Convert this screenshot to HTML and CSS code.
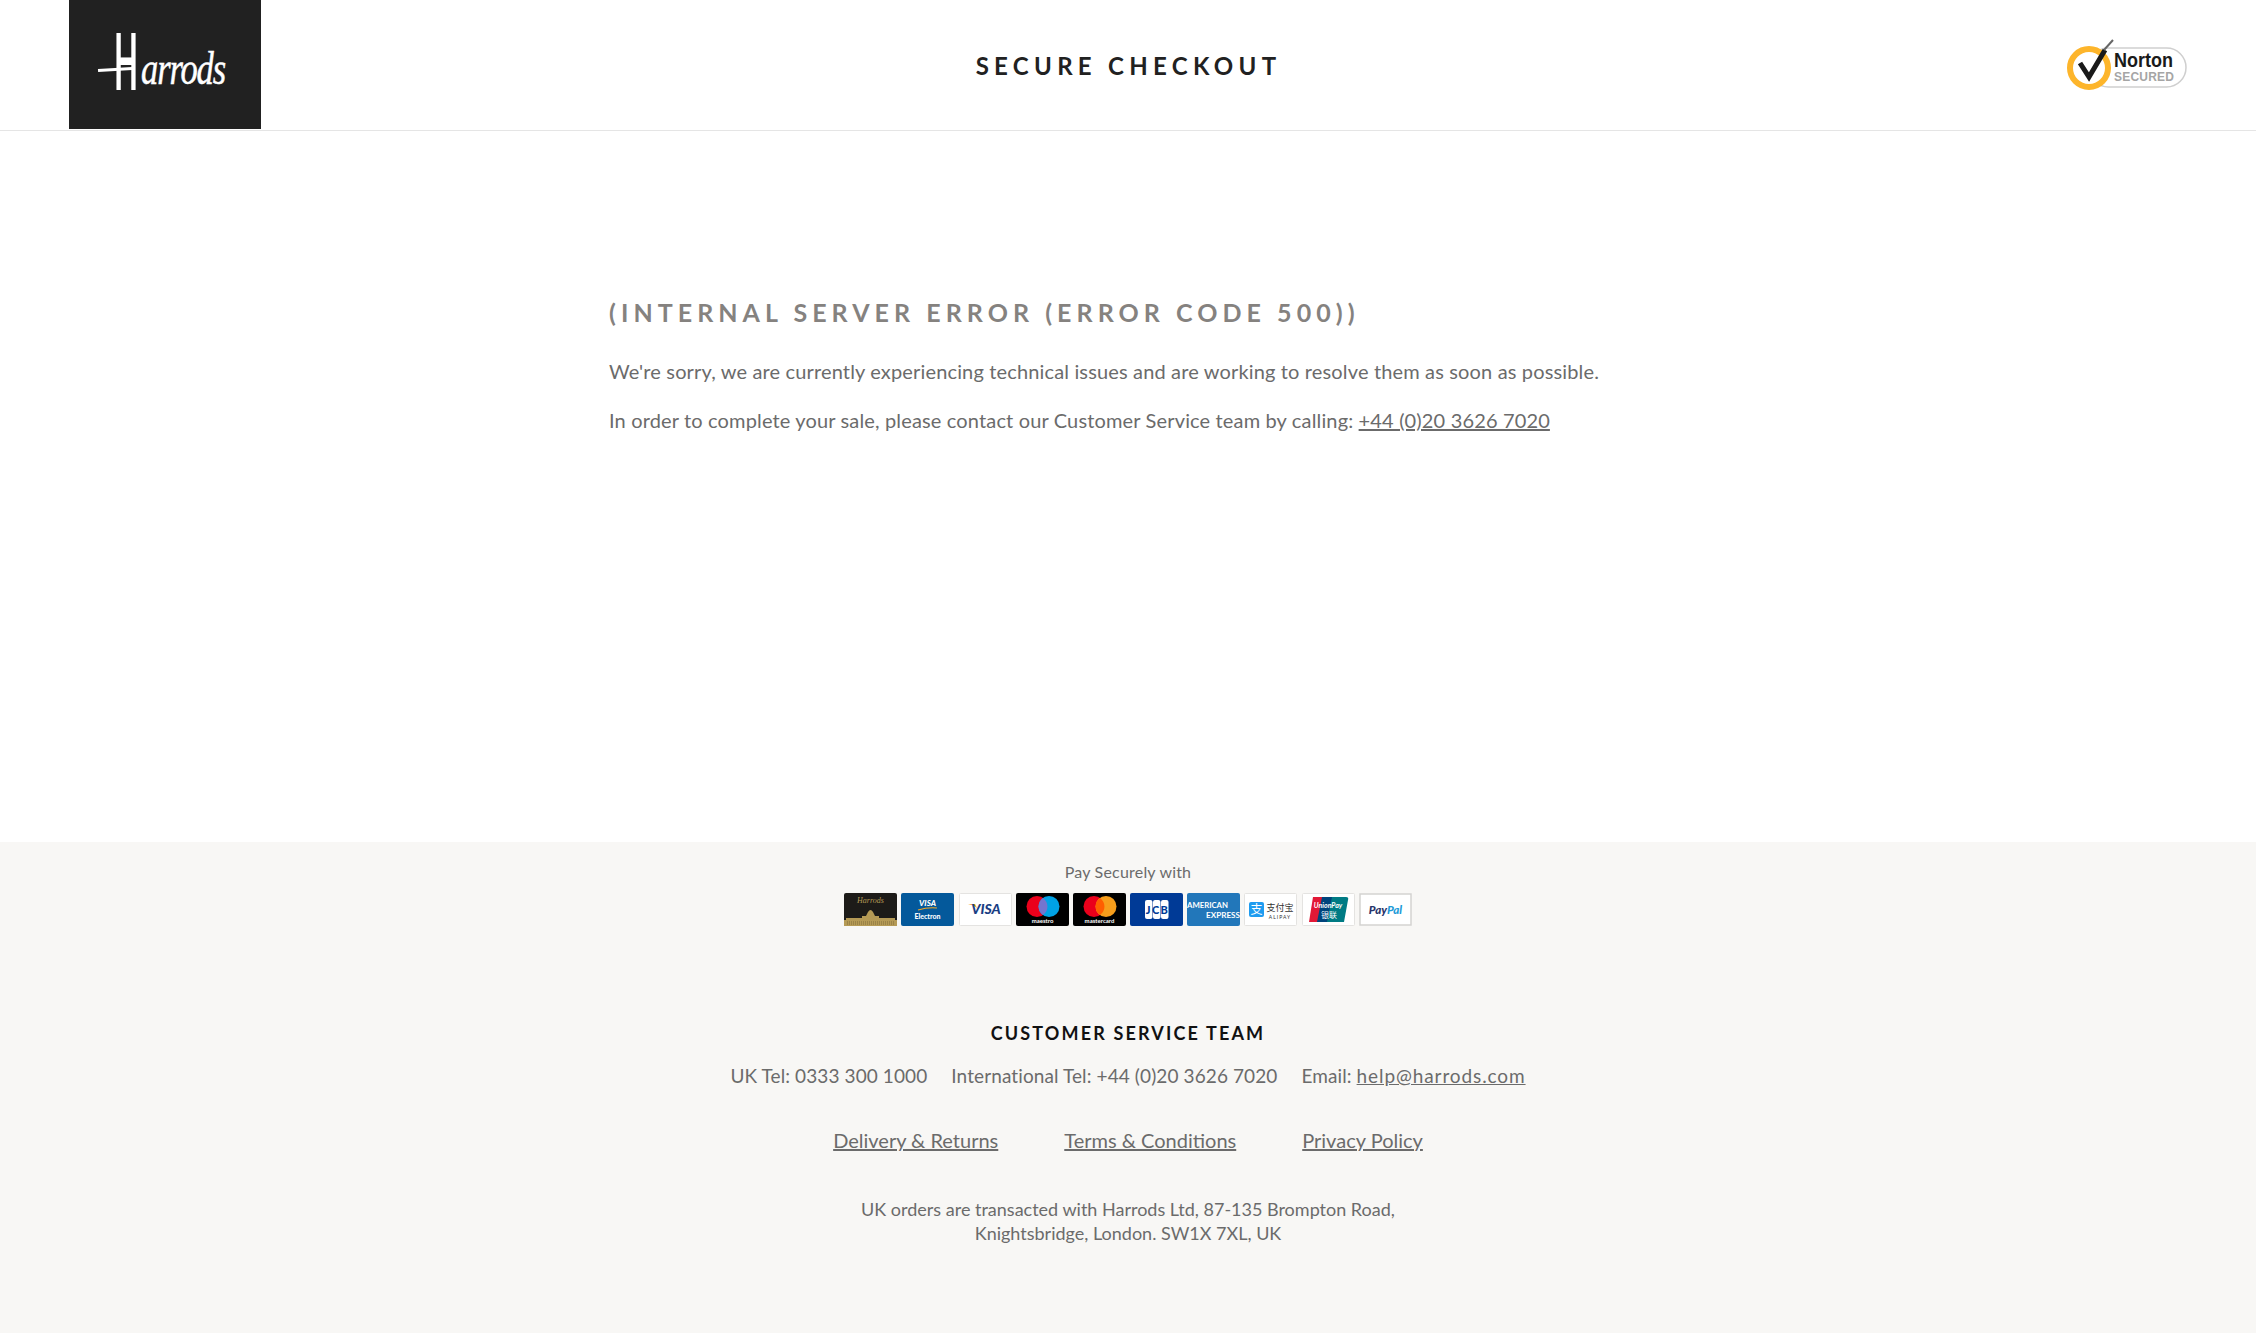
FILE: index.html
```html
<!DOCTYPE html>
<html lang="en">

<head>
    <meta charset="UTF-8">
    <title>Secure Checkout</title>
    <link rel="stylesheet" href="styles.css">
</head>

<body>
    <!-- header -->
    <header class="site-header">
        <a class="logo" href="#"><span class="logo-bar"></span><span class="logo-text"><span class="logo-cap">H</span><span class="logo-rest">arrods</span></span></a>
        <h1 class="checkout-title">SECURE CHECKOUT</h1>
        <div class="norton">
            <svg width="124" height="56" viewBox="0 0 124 56">
                <rect x="25" y="11" width="97" height="39" rx="19.500" fill="#fff" stroke="#cfcfcf" stroke-width="1.500"/>
                <circle cx="25" cy="31" r="19" fill="#fff" stroke="#fdb52b" stroke-width="6"/>
                <path d="M16 26l9 14L41 13" fill="none" stroke="#1a1a1a" stroke-width="5"/>
                <path d="M40 13l9-10" stroke="#666" stroke-width="2"/>
                <text x="50" y="30" class="norton-name" textLength="59" lengthAdjust="spacingAndGlyphs">Norton</text>
                <text x="50" y="44" class="norton-sub" textLength="60">SECURED</text>
            </svg>
        </div>
    </header>

    <!-- error message -->
    <main class="error-page">
        <h2 class="error-title">(INTERNAL SERVER ERROR (ERROR CODE 500))</h2>
        <p>We're sorry, we are currently experiencing technical issues and are working to resolve them as soon as possible.</p>
        <p>In order to complete your sale, please contact our Customer Service team by calling: <a href="#">+44 (0)20 3626 7020</a></p>
    </main>

    <!-- footer -->
    <footer class="site-footer">
        <div class="pay-label">Pay Securely with</div>
        <div class="cards">
            <svg class="card" viewBox="0 0 53 33"><rect width="53" height="33" rx="2" fill="#1d1b18"/><path d="M0 33v-6h2v-2h16v-2h4l2-4q2.500-4 5 0l2 4h4v2h16v2h2v6z" fill="#b59a55"/><path d="M3 29h47M3 31h47" stroke="#5e4f2a" stroke-width=".6" stroke-dasharray="1 1"/><text x="26.500" y="10" class="c-hcard">Harrods</text></svg>
            <svg class="card" viewBox="0 0 53 33"><rect width="53" height="33" rx="2" fill="#04599b"/><text x="26.500" y="13" class="c-visa c-white">VISA</text><path d="M17 17q10-3 19-2" stroke="#f7a823" stroke-width="1.200" fill="none"/><text x="26.500" y="26" class="c-small c-white">Electron</text></svg>
            <svg class="card" viewBox="0 0 53 33"><rect x=".5" y=".5" width="52" height="32" rx="1" fill="#fff" stroke="#e4e3e1"/><path d="M9 11h7l2 4q-3-3-9-4z" fill="#f7a823"/><text x="27" y="21" class="c-visa-big">VISA</text></svg>
            <svg class="card" viewBox="0 0 53 33"><rect width="53" height="33" rx="2" fill="#000"/><circle cx="21" cy="13.500" r="10.500" fill="#eb001b"/><circle cx="33" cy="13.500" r="10.500" fill="#00a2e5"/><path d="M27 4.900a10.500 10.500 0 0 1 0 17.200a10.500 10.500 0 0 1 0-17.200z" fill="#7375cf"/><text x="26.500" y="30" class="c-tiny c-white">maestro</text></svg>
            <svg class="card" viewBox="0 0 53 33"><rect width="53" height="33" rx="2" fill="#000"/><circle cx="21" cy="13.500" r="10.500" fill="#eb001b"/><circle cx="33" cy="13.500" r="10.500" fill="#f79e1b"/><path d="M27 4.900a10.500 10.500 0 0 1 0 17.200a10.500 10.500 0 0 1 0-17.200z" fill="#ff5f00"/><text x="26.500" y="30" class="c-tiny c-white">mastercard</text></svg>
            <svg class="card" viewBox="0 0 53 33"><rect width="53" height="33" rx="2" fill="#003a96"/><rect x="15" y="7" width="7.500" height="19" rx="2" fill="#fff"/><rect x="23" y="7" width="7.500" height="19" rx="2" fill="#fff"/><rect x="31" y="7" width="7.500" height="19" rx="2" fill="#fff"/><text x="26.800" y="21" class="c-jcb" textLength="22">JCB</text></svg>
            <svg class="card" viewBox="0 0 53 33"><rect width="53" height="33" rx="2" fill="#2277ba"/><text x="20.500" y="15" class="c-amex" textLength="41" lengthAdjust="spacingAndGlyphs">AMERICAN</text><text x="36" y="25" class="c-amex" textLength="34" lengthAdjust="spacingAndGlyphs">EXPRESS</text></svg>
            <svg class="card" viewBox="0 0 53 33"><rect x=".5" y=".5" width="52" height="32" rx="1" fill="#fff" stroke="#e4e3e1"/><rect x="5" y="9" width="15" height="15" rx="2" fill="#1f9cf0"/><text x="12.500" y="21" class="c-ali">支</text><text x="36" y="18" class="c-ali-cn">支付宝</text><text x="36" y="26" class="c-ali-en">ALIPAY</text></svg>
            <svg class="card" viewBox="0 0 53 33"><rect x=".5" y=".5" width="52" height="32" rx="1" fill="#fff" stroke="#e4e3e1"/><path d="M11 4h14l-5 25H7z" fill="#e21836"/><path d="M20 4h13l-5 25H15z" fill="#00447c"/><path d="M30 4h14q3 0 2 3l-4 22H25z" fill="#007b84"/><text x="26" y="15" class="c-up">UnionPay</text><text x="27" y="25" class="c-up-cn">银联</text></svg>
            <svg class="card" viewBox="0 0 53 33"><rect x="1" y="1" width="51" height="31" fill="#fff" stroke="#d4d3d1" stroke-width="1.500"/><text x="26.500" y="20.500" class="c-paypal"><tspan class="c-pay">Pay</tspan><tspan class="c-pal">Pal</tspan></text></svg>
        </div>

        <h3 class="service-title">CUSTOMER SERVICE TEAM</h3>
        <div class="contact-row">
            <span>UK Tel: 0333 300 1000</span>
            <span>International Tel: +44 (0)20 3626 7020</span>
            <span>Email: <a class="email-link" href="#">help@harrods.com</a></span>
        </div>
        <div class="link-row">
            <a href="#">Delivery &amp; Returns</a>
            <a href="#">Terms &amp; Conditions</a>
            <a href="#">Privacy Policy</a>
        </div>
        <p class="address">UK orders are transacted with Harrods Ltd, 87-135 Brompton Road,<br>Knightsbridge, London. SW1X 7XL, UK</p>
    </footer>
</body>

</html>
```

FILE: styles.css
```css
body {
    font-family: Lato, "Noto Sans CJK SC", sans-serif;
    background-color: #fff;
    color: #6b6b6b;
    margin: 0;
    padding: 0;
}

a {
    color: #6b6b6b;
}

.site-header {
    display: grid;
    grid-template-columns: 1fr auto 1fr;
    align-items: center;
    height: 130px;
    padding: 0 68px 0 69px;
    border-bottom: 1px solid #e5e5e5;
}

.logo {
    position: relative;
    display: flex;
    align-items: center;
    padding-left: 44px;
    box-sizing: border-box;
    width: 192px;
    height: 129px;
    align-self: start;
    background-color: #212121;
    text-decoration: none;
}

/* crossbar of the H runs out to the left */
.logo-bar {
    position: absolute;
    left: 29px;
    top: 68px;
    width: 34px;
    height: 3px;
    background-color: #fff;
    transform: rotate(-3deg);
}

.logo-text {
    display: flex;
    align-items: baseline;
    color: #fff;
    white-space: nowrap;
}

.logo-cap {
    display: inline-block;
    font-family: Lato, sans-serif;
    font-size: 78px;
    line-height: 60px;
    font-weight: 700;
    margin: 0 -17px;
    transform: translateY(3px) scaleX(0.4);
}

.logo-rest {
    display: inline-block;
    margin-left: 2px;
    font-family: "Liberation Serif", serif;
    font-style: italic;
    font-size: 46px;
    line-height: 60px;
    letter-spacing: -1.5px;
    transform: translateY(-3px) scaleX(0.75);
    transform-origin: left;
    -webkit-text-stroke: 0.5px #fff;
}

.checkout-title {
    margin: 0;
    color: #212121;
    font-size: 24px;
    font-weight: 700;
    letter-spacing: 5.3px;
}

.norton {
    justify-self: end;
    width: 124px;
    height: 56px;
}

.norton-name {
    font-family: "Liberation Sans", sans-serif;
    font-size: 20px;
    font-weight: 700;
    fill: #1a1a1a;
}

.norton-sub {
    font-family: "Liberation Sans", sans-serif;
    font-size: 12px;
    font-weight: 700;
    fill: #a5a5a5;
}

.error-page {
    width: 1038px;
    height: 711px;
    box-sizing: border-box;
    margin: 0 auto;
    padding-top: 166px;
    font-size: 20px;
    letter-spacing: 0.15px;
}

.error-title {
    margin: 0 0 33px;
    color: #85827f;
    font-size: 25px;
    font-weight: 700;
    letter-spacing: 5.05px;
}

.error-page p {
    margin: 0 0 26px;
    line-height: 23px;
}

.site-footer {
    height: 491px;
    box-sizing: border-box;
    padding-top: 20px;
    background-color: #f8f7f5;
    text-align: center;
}

.pay-label {
    font-size: 16px;
    line-height: 20px;
    letter-spacing: 0.2px;
}

.cards {
    display: flex;
    justify-content: center;
    gap: 4.200px;
    margin-top: 11px;
}

.card {
    width: 53px;
    height: 33px;
}

.card text {
    text-anchor: middle;
}

.c-tiny {
    font-size: 6px;
    font-weight: 700;
}

.c-small {
    font-size: 7px;
    font-weight: 900;
}

.c-white {
    fill: #fff;
}

.c-hcard {
    font-family: "Liberation Serif", serif;
    font-style: italic;
    font-size: 8px;
    fill: #b59a55;
}

.c-visa {
    font-size: 8px;
    font-weight: 900;
    font-style: italic;
}

.c-visa-big {
    font-size: 14px;
    font-weight: 900;
    font-style: italic;
    fill: #1a3e84;
}

.c-jcb {
    font-size: 11px;
    font-weight: 900;
    fill: #003a96;
}

.c-amex {
    font-size: 8px;
    fill: #fff;
    font-weight: 700;
}

.c-ali {
    font-size: 12px;
    fill: #fff;
}

.c-ali-cn {
    font-size: 9px;
    fill: #333;
}

.c-ali-en {
    font-size: 5px;
    letter-spacing: 1px;
    fill: #333;
}

.c-up {
    font-size: 7px;
    font-style: italic;
    font-weight: 700;
    fill: #fff;
}

.c-up-cn {
    font-size: 8px;
    fill: #fff;
}

.c-paypal {
    font-size: 11.500px;
    font-weight: 900;
    font-style: italic;
}

.c-pay {
    fill: #27346a;
}

.c-pal {
    fill: #1f9cd8;
}

.service-title {
    margin: 96px 0 0;
    color: #111;
    font-size: 18px;
    line-height: 22px;
    font-weight: 700;
    letter-spacing: 2.150px;
}

.contact-row {
    display: flex;
    justify-content: center;
    gap: 24px;
    margin-top: 21px;
    font-size: 19px;
    line-height: 22px;
    letter-spacing: 0.1px;
}

.email-link {
    letter-spacing: 0.9px;
}

.link-row {
    display: flex;
    justify-content: center;
    gap: 66px;
    margin-top: 42px;
    font-size: 20px;
    line-height: 22px;
}

.address {
    margin: 46px 0 0;
    font-size: 18px;
    line-height: 24px;
}
```
